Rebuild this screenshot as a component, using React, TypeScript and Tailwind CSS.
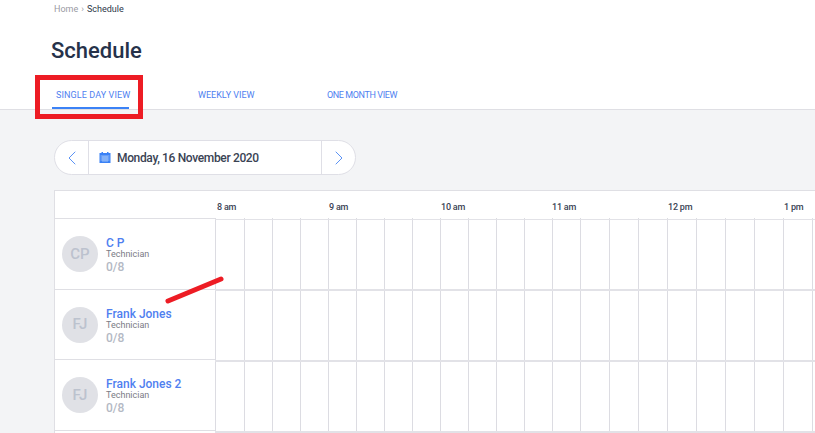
import React from 'react';
import { ChevronLeft, ChevronRight } from 'lucide-react';

const tabs = ['Single Day View', 'Weekly View', 'One Month View'];

const hours = [
  { label: '8 am', cls: 'w-[112px]' },
  { label: '9 am', cls: 'w-[112px]' },
  { label: '10 am', cls: 'w-[111px]' },
  { label: '11 am', cls: 'w-[116px]' },
  { label: '12 pm', cls: 'w-[116px]' },
  { label: '1 pm', cls: 'w-[31px]' },
];

const technicians = [
  { initials: 'CP', name: 'C P', cls: 'h-[71px]' },
  { initials: 'FJ', name: 'Frank Jones', cls: 'h-[70px]' },
  { initials: 'FJ', name: 'Frank Jones 2', cls: 'h-[71px]' },
];

// row heights of the time grid, the first one also carries the top line
const gridRows = ['h-[72px] border-t border-b-2', 'h-[71px] border-b-2', 'h-[71px] border-b-2'];

// slot lines sit at 215, 244, 272 ... 580, then 29px apart
const slots = Array.from({ length: 22 }, (_, i) => i);

const TimeRow = () => (
  <div className="flex h-full">
    {slots.map((i) => (
      <div
        key={i}
        className={`${i > 0 && i < 13 ? 'w-[28px]' : 'w-[29px]'} shrink-0 h-full border-l border-[#dcdce2]`}
      />
    ))}
  </div>
);

const App: React.FC = () => {
  return (
    <div className="relative w-[815px] h-[433px] overflow-hidden bg-[#f3f4f6] font-['Roboto',sans-serif]">
      {/* Header */}
      <div className="h-[110px] bg-white border-b border-[#dfdfe4]">
        <div className="pl-[54px] pt-[4px] text-[9px] leading-[11px] flex gap-[3px]">
          <span className="text-[#9a9aa3]">Home</span>
          <span className="text-[#9a9aa3]">›</span>
          <span className="text-[#2d3748]">Schedule</span>
        </div>
        <h1 className="pl-[51px] pt-[22px] text-[22px] leading-[28px] font-medium text-[#26324a]">Schedule</h1>
        <div className="flex pl-[52px] pt-[17px]">
          {tabs.map((tab, i) => (
            <div
              key={tab}
              className={`h-[27px] pt-[7px] text-[9px] leading-[12px] uppercase text-[#4f7ff0] whitespace-nowrap ${
                i === 0
                  ? 'w-[77px] pl-[4px] tracking-[0.1px] border-b-2 border-[#3b82f6] mr-[69px]'
                  : i === 1
                    ? 'w-[129px]'
                    : 'tracking-[-0.4px]'
              }`}
            >
              {tab}
            </div>
          ))}
        </div>
      </div>

      {/* Date picker */}
      <div className="ml-[54px] mt-[30px] w-[302px] h-[35px] flex items-center bg-white border border-[#dfdfe6] rounded-full">
        <div className="w-[34px] h-full flex items-center justify-center border-r border-[#dfdfe6]">
          <ChevronLeft size={24} strokeWidth={1} className="text-[#5b93f5]" />
        </div>
        <div className="flex-1 flex items-center pl-[10px] gap-[6px] text-[12px] font-medium tracking-[-0.35px] text-[#3a4354]">
          <svg width="12" height="11" viewBox="0 0 12 11" className="shrink-0">
            <rect x="0.5" y="1" width="11" height="10" fill="#3b82f6" />
            <rect x="2.5" y="0" width="1.5" height="2" fill="#3b82f6" />
            <rect x="8" y="0" width="1.5" height="2" fill="#3b82f6" />
            <path d="M1.5 4h9M1.5 6h9M1.5 8h9M4 4v6M6 4v6M8 4v6" stroke="#cfe0fb" strokeWidth="0.6" />
          </svg>
          <span>Monday, 16 November 2020</span>
        </div>
        <div className="w-[34px] h-full flex items-center justify-center border-l border-[#dfdfe6]">
          <ChevronRight size={24} strokeWidth={1} className="text-[#5b93f5]" />
        </div>
      </div>

      {/* Schedule table */}
      <div className="ml-[54px] mt-[15px] w-[761px] bg-white border-t border-l border-[#dfdfe4]">
        <div className="flex h-[27px]">
          <div className="w-[162px] shrink-0" />
          {hours.map((h) => (
            <div
              key={h.label}
              className={`${h.cls} shrink-0 pt-[10px] text-[9px] leading-[12px] font-medium tracking-[-0.2px] text-[#3a4354] whitespace-nowrap`}
            >
              {h.label}
            </div>
          ))}
        </div>
        <div className="flex">
          <div className="w-[160px] shrink-0">
            {technicians.map((t) => (
              <div key={t.name} className={`${t.cls} flex items-center pl-[7px] gap-[8px] border-t border-[#dfdfe4]`}>
                <div className="w-[36px] h-[36px] rounded-full bg-[#e0e1e6] flex items-center justify-center text-[15px] font-medium text-[#bcc2ce]">
                  {t.initials}
                </div>
                <div className="flex flex-col pt-[2px]">
                  <span className="text-[12px] leading-[15px] -mb-[2px] font-medium text-[#4f7ff0]">{t.name}</span>
                  <span className="text-[9px] leading-[11px] text-[#7b7b85]">Technician</span>
                  <span className="text-[12px] leading-[14px] font-medium text-[#b4b9c4]">0/8</span>
                </div>
              </div>
            ))}
            <div className="h-[3px] border-t border-[#dfdfe4]" />
          </div>
          <div className="flex-1 overflow-hidden">
            <div className="h-[1px]">
              <TimeRow />
            </div>
            {gridRows.map((cls) => (
              <div key={cls} className={`${cls} border-[#e2e2e7]`}>
                <TimeRow />
              </div>
            ))}
          </div>
        </div>
      </div>

      {/* Annotations drawn over the screenshot */}
      <div className="absolute left-[35px] top-[75px] w-[108px] h-[44px] border-[5px] border-[#ed1c24]" />
      <svg className="absolute left-[160px] top-[270px]" width="70" height="40" viewBox="0 0 70 40">
        <path d="M8 31 L61 9" stroke="#ed1c24" strokeWidth="5" strokeLinecap="round" />
      </svg>
    </div>
  );
};

export default App;
